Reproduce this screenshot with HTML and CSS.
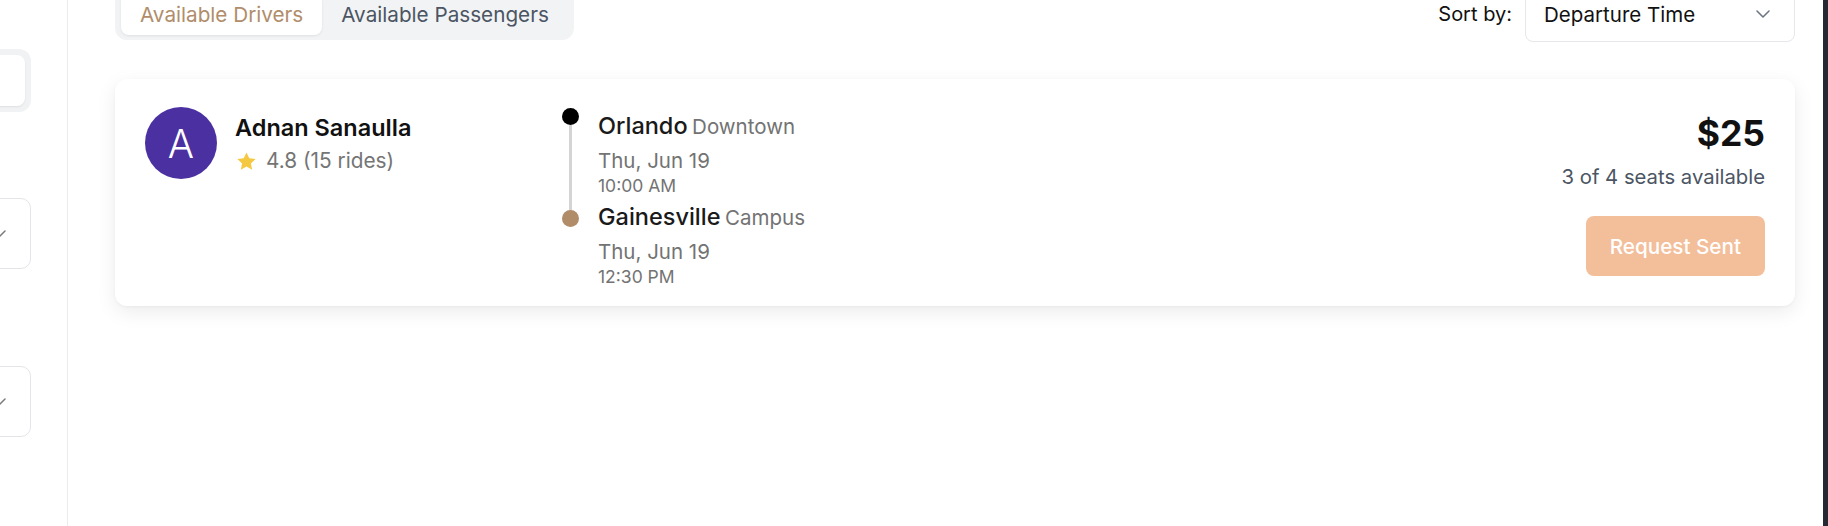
FILE: index.html
```html
<!DOCTYPE html>
<html lang="en">
<head>
<meta charset="utf-8">
<title>Rides</title>
<link rel="stylesheet" href="styles.css">
</head>
<body>
<div class="app">
  <aside class="sidebar">
    <div class="side-inner">
      <div class="seg"><div class="seg-item"></div></div>
      <div class="side-select first">
        <svg class="side-chev" width="14" height="8" viewBox="0 0 14 8"><path d="M1 1 L7 7 L13 1" fill="none" stroke="#7a7a7a" stroke-width="1.5" stroke-linecap="round" stroke-linejoin="round"/></svg>
      </div>
      <div class="side-select second">
        <svg class="side-chev" width="14" height="8" viewBox="0 0 14 8"><path d="M1 1 L7 7 L13 1" fill="none" stroke="#7a7a7a" stroke-width="1.5" stroke-linecap="round" stroke-linejoin="round"/></svg>
      </div>
    </div>
  </aside>
  <main class="main">
    <div class="toolbar">
      <div class="tabs">
        <div class="tab active">Available Drivers</div>
        <div class="tab">Available Passengers</div>
      </div>
      <div class="sort">
        <span class="sort-label">Sort by:</span>
        <div class="select">
          <span>Departure Time</span>
          <svg width="14" height="8" viewBox="0 0 14 8"><path d="M1 1 L7 7 L13 1" fill="none" stroke="#6b7280" stroke-width="1.5" stroke-linecap="round" stroke-linejoin="round"/></svg>
        </div>
      </div>
    </div>

    <div class="card">
      <div class="driver">
        <div class="avatar">A</div>
        <div class="driver-info">
          <div class="name">Adnan Sanaulla</div>
          <div class="rating">
            <svg class="star" width="23" height="23" viewBox="0 0 24 24"><path d="M12 2.5l2.9 6.1 6.6.8-4.9 4.6 1.3 6.6L12 17.3l-5.9 3.3 1.3-6.6-4.9-4.6 6.6-.8z" fill="#f5c842"/></svg>
            <span>4.8 (15 rides)</span>
          </div>
        </div>
      </div>

      <div class="route">
        <div class="rail">
          <span class="dot start"></span>
          <span class="line"></span>
          <span class="dot end"></span>
        </div>
        <div class="stops">
          <div class="stop">
            <div class="place"><span class="city">Orlando</span> <span class="area">Downtown</span></div>
            <div class="date">Thu, Jun 19</div>
            <div class="time">10:00 AM</div>
          </div>
          <div class="stop second">
            <div class="place"><span class="city">Gainesville</span> <span class="area">Campus</span></div>
            <div class="date">Thu, Jun 19</div>
            <div class="time">12:30 PM</div>
          </div>
        </div>
      </div>

      <div class="offer">
        <div class="price">$25</div>
        <div class="seats">3 of 4 seats available</div>
        <button class="request">Request Sent</button>
      </div>
    </div>
  </main>
  <div class="edge"></div>
</div>
</body>
</html>
```

FILE: styles.css
```css
* { box-sizing: border-box; }

html, body {
  margin: 0;
  padding: 0;
  background: #ffffff;
}

body {
  font-family: Inter, "Noto Sans", "Liberation Sans", sans-serif;
  color: #111111;
  height: 526px;
  overflow: hidden;
}

.app {
  display: flex;
  height: 526px;
}

/* Sidebar (scrolled, only the right edge visible) */
.sidebar {
  width: 68px;
  flex-shrink: 0;
  border-right: 1px solid #ececec;
  overflow: hidden;
}

.side-inner {
  width: 260px;
  margin-left: -229px;
  display: flex;
  flex-direction: column;
}

.seg {
  margin-top: 49px;
  height: 63px;
  background: #f1f2f4;
  border-radius: 12px;
  padding: 6px;
}

.seg-item {
  height: 100%;
  width: 100%;
  background: #ffffff;
  border-radius: 8px;
  box-shadow: 0 1px 2px rgba(0, 0, 0, 0.08);
}

.side-select {
  height: 71px;
  border: 1px solid #e3e5e8;
  border-radius: 10px;
  display: flex;
  align-items: center;
  justify-content: flex-end;
  padding-right: 24px;
}

.side-select.first { margin-top: 86px; }
.side-select.second { margin-top: 97px; }

/* Main */
.main {
  flex: 1;
  min-width: 0;
  padding: 0 28px 0 47px;
}

.toolbar {
  display: flex;
  justify-content: space-between;
  align-items: center;
  margin-top: -14px;
}

.tabs {
  display: flex;
  background: #f2f3f5;
  padding: 5px 6px;
  border-radius: 12px;
}

.tab {
  padding: 7px 19px;
  font-size: 20.7px;
  line-height: 27px;
  border-radius: 8px;
  color: #4b5563;
}

.tab.active {
  background: #ffffff;
  color: #b08d6b;
  box-shadow: 0 1px 3px rgba(0, 0, 0, 0.08);
}

.sort {
  display: flex;
  align-items: center;
  gap: 13px;
}

.sort-label {
  font-size: 20px;
  color: #111111;
}

.select {
  width: 270px;
  height: 56px;
  border: 1px solid #e5e7eb;
  border-radius: 8px;
  display: flex;
  align-items: center;
  justify-content: space-between;
  padding: 0 24px 0 18px;
  font-size: 20.5px;
  color: #111111;
}

/* Card */
.card {
  margin-top: 37px;
  background: #ffffff;
  border-radius: 12px;
  box-shadow: 0 6px 20px rgba(0, 0, 0, 0.08), 0 1px 3px rgba(0, 0, 0, 0.04);
  padding: 28px 30px 18px;
  display: flex;
  align-items: flex-start;
}

.driver {
  width: 417px;
  flex-shrink: 0;
  display: flex;
  gap: 18px;
}

.avatar {
  width: 72px;
  height: 72px;
  border-radius: 50%;
  background: #4b30a1;
  color: #ffffff;
  display: flex;
  align-items: center;
  justify-content: center;
  font-size: 39px;
  font-weight: 300;
}

.driver-info {
  padding-top: 7px;
}

.name {
  font-size: 23.5px;
  line-height: 28px;
  font-weight: 600;
  color: #111111;
}

.rating {
  margin-top: 6px;
  display: flex;
  align-items: center;
  gap: 8px;
  font-size: 20.8px;
  line-height: 26px;
  color: #757575;
}

/* Route */
.route {
  display: flex;
  gap: 19px;
}

.rail {
  width: 17px;
  display: flex;
  flex-direction: column;
  align-items: center;
  padding-top: 1px;
}

.dot {
  width: 17px;
  height: 17px;
  border-radius: 50%;
}

.dot.start { background: #000000; }
.dot.end { background: #b08c68; }

.line {
  width: 3px;
  height: 85px;
  background: #d4d4d4;
}

.stops {
  padding-top: 5px;
}

.stop.second {
  margin-top: 6px;
}

.place {
  line-height: 28px;
  white-space: nowrap;
}

.city {
  font-size: 23.5px;
  font-weight: 500;
  color: #1a1a1a;
}

.area {
  font-size: 20.5px;
  color: #737373;
}

.date {
  margin-top: 6px;
  font-size: 20.5px;
  line-height: 26px;
  color: #737373;
}

.time {
  margin-top: 1px;
  font-size: 17.5px;
  line-height: 22px;
  color: #737373;
}

/* Offer */
.offer {
  margin-left: auto;
  display: flex;
  flex-direction: column;
  align-items: flex-end;
  padding-top: 7px;
}

.price {
  font-size: 35.5px;
  line-height: 40px;
  font-weight: 700;
  color: #111111;
}

.seats {
  margin-top: 10px;
  font-size: 20.3px;
  line-height: 26px;
  color: #4b5563;
}

.request {
  margin-top: 26px;
  height: 60px;
  padding: 0 24px;
  border: none;
  border-radius: 8px;
  background: #f3be9a;
  color: #ffffff;
  font-family: inherit;
  font-size: 20.7px;
  font-weight: 500;
}

.edge {
  width: 5px;
  flex-shrink: 0;
  background: #262833;
}
```
